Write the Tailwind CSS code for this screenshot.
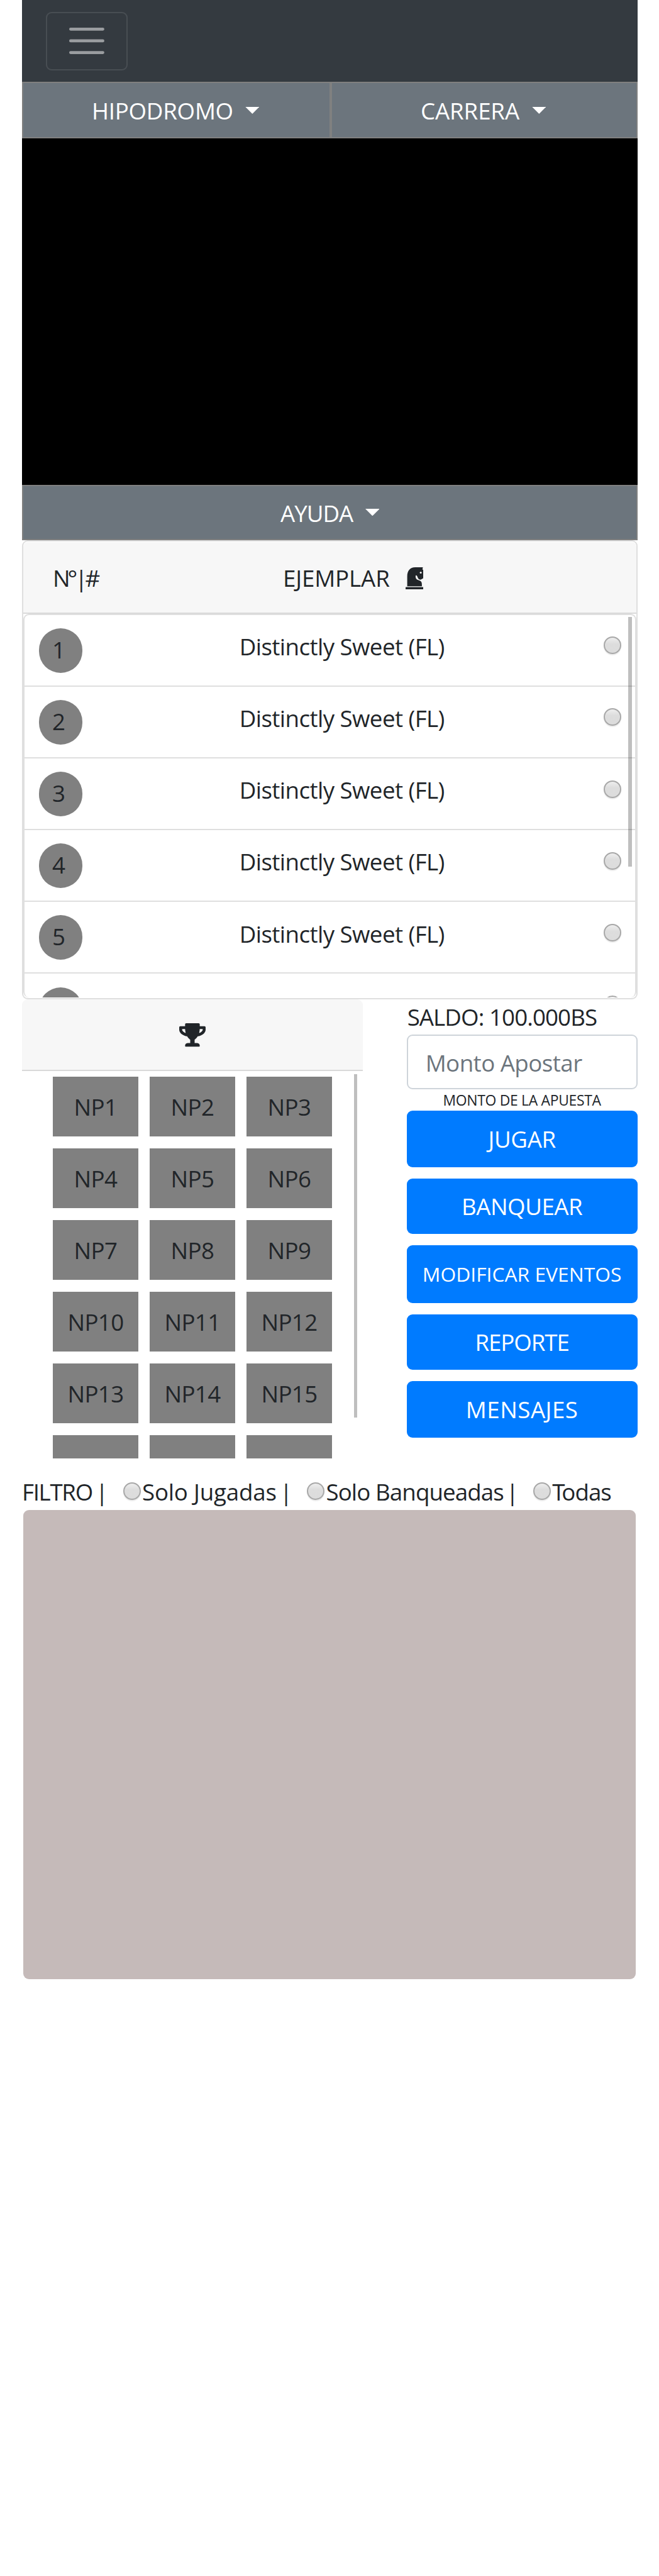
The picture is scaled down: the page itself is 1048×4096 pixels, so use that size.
<!DOCTYPE html>
<html lang="es">
<head>
<meta charset="utf-8">
<title>Hipodromo</title>
<script src="https://cdn.jsdelivr.net/npm/@tailwindcss/browser@4"></script>
</head>
<body class="h-[4096px] overflow-hidden bg-white text-[#212529] font-['Open_Sans',sans-serif] text-[36.7px] leading-[50px] whitespace-nowrap">
<main class="ml-[35px] w-[978.6px]">
  <nav class="h-[130.4px] bg-[#343a40] pt-[18.6px] pl-[38px]">
    <button class="flex h-[93px] w-[129.6px] items-center justify-center rounded-[9px] border-2 border-white/10">
      <svg class="size-[69.9px]" viewBox="0 0 30 30" fill="none" stroke="rgba(255,255,255,.5)" stroke-width="2" stroke-linecap="round"><path d="M4 7h22M4 15h22M4 23h22"/></svg>
    </button>
  </nav>
  <div class="flex h-[89.9px] text-white">
    <button class="flex w-[490.6px] items-center border-2 border-[#808080] bg-[#6c757d] pl-[109px]">
      <span class="pt-[1px] tracking-[-0.26px]">HIPODROMO</span>
      <svg class="ml-[18.6px] h-[11px] w-[22.6px]" viewBox="0 0 22 11"><path d="M0 0h22L11 11z" fill="#fff"/></svg>
    </button>
    <button class="flex flex-1 items-center border-2 border-[#808080] bg-[#6c757d] pl-[141.5px]">
      <span class="pt-[1px] tracking-[-0.14px]">CARRERA</span>
      <svg class="ml-[19.8px] h-[11px] w-[22.6px]" viewBox="0 0 22 11"><path d="M0 0h22L11 11z" fill="#fff"/></svg>
    </button>
  </div>
  <div class="h-[550.3px] bg-black"></div>
  <button class="flex h-[88.4px] w-full items-center border-2 border-[#808080] bg-[#6c757d] pl-[409px] text-white">
    <span class="pt-[2px] tracking-[-1px]">AYUDA</span>
    <svg class="ml-[19.6px] -mt-[1px] h-[11.4px] w-[22.6px]" viewBox="0 0 22 11"><path d="M0 0h22L11 11z" fill="#fff"/></svg>
  </button>

  <section class="h-[729.8px] rounded-[9px] border-2 border-[#dfdfdf]">
    <header class="mt-[1.5px] flex h-[113.9px] items-center rounded-t-[8px] border-b-2 border-[#dadada] bg-[#f7f7f7] pl-[47px]">
      <span class="w-[366px] pt-[2px] tracking-[-4px]">N°|#</span>
      <span class="pt-[2px] tracking-[-0.13px]">EJEMPLAR</span>
      <svg class="ml-[25px] mt-[3px] h-[35px] w-[28.5px]" viewBox="91 69 110 135" fill="#212529">
        <rect x="91" y="191" width="110" height="13" rx="2"/>
        <path d="M101 186V125C101 90 118 70 150 69H197C197 75 194 79 195 84L201 83V136C195 137 189 144 182 145C172 146 168 138 165 131C163 124 160 118 154 118C151 124 152 133 156 139C162 147 174 147 182 153C189 158 191 165 191 175V186Z"/>
        <circle cx="184" cy="102" r="6" fill="#f7f7f7"/>
      </svg>
    </header>
    <div class="relative h-[609.2px] overflow-hidden rounded-[9px] border-2 border-b-0 border-[#dfdfdf]">
      <div id="runners" class="-mt-[1px]"></div>
      <div class="absolute top-[3px] right-[5px] h-[396.5px] w-[5.4px] bg-black/25"></div>
    </div>
  </section>

  <div class="flex h-[730.4px]">
    <section class="w-[542.5px]">
      <header class="flex h-[114.2px] items-center justify-center rounded-t-[9px] border-b-2 border-[#d9d9d9] bg-[#f7f7f7]">
        <svg class="mt-[2px] h-[37.3px] w-[42px]" viewBox="0 0 576 512" fill="#212529"><path d="M552 64H448V24c0-13.300-10.700-24-24-24H152c-13.300 0-24 10.700-24 24v40H24C10.700 64 0 74.700 0 88v56c0 35.700 22.500 72.400 61.900 100.700 31.500 22.700 69.800 37.100 110 41.700C203.300 338.500 240 360 240 360v72h-48c-35.300 0-64 20.700-64 56v12c0 6.600 5.400 12 12 12h296c6.600 0 12-5.400 12-12v-12c0-35.300-28.700-56-64-56h-48v-72s36.700-21.500 68.100-73.600c40.300-4.600 78.600-19 110-41.700 39.300-28.300 61.900-65 61.900-100.700V88c0-13.300-10.700-24-24-24zM99.300 192.800C74.900 175.200 64 155.600 64 144v-16h64.200c1 32.600 5.800 61.200 12.800 86.200-15.100-5.200-29.200-12.400-41.700-21.400zM512 144c0 16.100-17.700 36.100-35.300 48.800-12.500 9-26.700 16.200-41.800 21.400 7-25 11.800-53.600 12.800-86.200H512v16z"/></svg>
      </header>
      <div class="relative h-[616.2px] overflow-hidden">
        <div id="plays" class="mt-[9.5px] ml-[49px] grid w-[444px] grid-cols-3 gap-x-[18px] gap-y-[19px]"></div>
        <div class="absolute top-[5.5px] left-[527.8px] h-[545.5px] w-[5.4px] bg-black/25"></div>
      </div>
    </section>
    <section class="ml-[69.2px] w-[367px]">
      <div class="h-[56.2px] pt-[3px] pl-[1px] tracking-[-0.91px]">SALDO: 100.000BS</div>
      <div class="flex h-[87.4px] items-center rounded-[9px] border-2 border-[#ced4da] pt-[3px] pl-[28px] tracking-[-0.53px] text-[#6c757d]">Monto Apostar</div>
      <div class="h-[33.7px] pt-[1px] text-center text-[22.9px] leading-[33px] tracking-[-0.3px]">MONTO DE LA APUESTA</div>
      <div class="grid gap-[18.2px] text-center text-white">
        <button class="h-[89.8px] rounded-[9px] bg-[#007bff] pt-[1px] tracking-[-0.37px]">JUGAR</button>
        <button class="h-[88px] rounded-[9px] bg-[#007bff] tracking-[-0.48px]">BANQUEAR</button>
        <button class="h-[91.6px] rounded-[9px] bg-[#007bff] text-[31.8px]">MODIFICAR EVENTOS</button>
        <button class="h-[87.8px] rounded-[9px] bg-[#007bff] tracking-[-1.08px]">REPORTE</button>
        <button class="h-[90px] rounded-[9px] bg-[#007bff] tracking-[0.49px]">MENSAJES</button>
      </div>
    </section>
  </div>

  <div class="flex h-[82px] items-center pt-[23px]">
    <span class="w-[117px] tracking-[-1.3px]">FILTRO</span><span class="w-[43.7px]">|</span>
    <i class="-mt-[1px] size-[28px] shrink-0 rounded-full border-2 border-[#a8a8a8] bg-linear-to-b from-[#eeeeee] via-[#dddddd] via-40% to-[#dcdcdc] shadow-[0_2px_1px_rgba(0,0,0,0.08)]"></i>
    <span class="ml-[2.3px] w-[219px] tracking-[-0.19px]">Solo Jugadas</span><span class="w-[43.4px]">|</span>
    <i class="-mt-[1px] size-[28px] shrink-0 rounded-full border-2 border-[#a8a8a8] bg-linear-to-b from-[#eeeeee] via-[#dddddd] via-40% to-[#dcdcdc] shadow-[0_2px_1px_rgba(0,0,0,0.08)]"></i>
    <span class="ml-[2.1px] w-[286.2px] tracking-[-0.9px]">Solo Banqueadas</span><span class="w-[43.1px]">|</span>
    <i class="-mt-[1px] size-[28px] shrink-0 rounded-full border-2 border-[#a8a8a8] bg-linear-to-b from-[#eeeeee] via-[#dddddd] via-40% to-[#dcdcdc] shadow-[0_2px_1px_rgba(0,0,0,0.08)]"></i>
    <span class="ml-[2.4px] tracking-[-1px]"><span class="tracking-[-5px]">T</span>odas</span>
  </div>
  <div class="ml-[2.4px] h-[745.4px] w-[973.9px] rounded-[9px] bg-[#c5bab9]"></div>
</main>
<script>
  document.getElementById('runners').innerHTML = [1, 2, 3, 4, 5, 6].map(n => `
    <div class="flex h-[114.2px] border-b-2 border-[#dfdfdf] pl-[22.5px]">
      <span class="mt-[21.3px] flex h-[71px] w-[69px] shrink-0 justify-center rounded-full bg-[#808080] pt-[9px] pr-[5px]">${n}</span>
      <span class="mt-[25.4px] ml-[250.2px] w-[579px] tracking-[-0.57px]">Distinctly Sweet (FL)</span>
      <i class="mt-[34.8px] size-[28px] shrink-0 rounded-full border-2 border-[#a8a8a8] bg-linear-to-b from-[#eeeeee] via-[#dddddd] via-40% to-[#dcdcdc] shadow-[0_2px_1px_rgba(0,0,0,0.08)]"></i>
    </div>`).join('');
  document.getElementById('plays').innerHTML = Array.from({length: 18}, (_, i) => `
    <div class="flex h-[95px] items-center justify-center bg-[#808080] tracking-[-0.6px]">${i < 15 ? 'NP' + (i + 1) : ''}</div>`).join('');
</script>
</body>
</html>
